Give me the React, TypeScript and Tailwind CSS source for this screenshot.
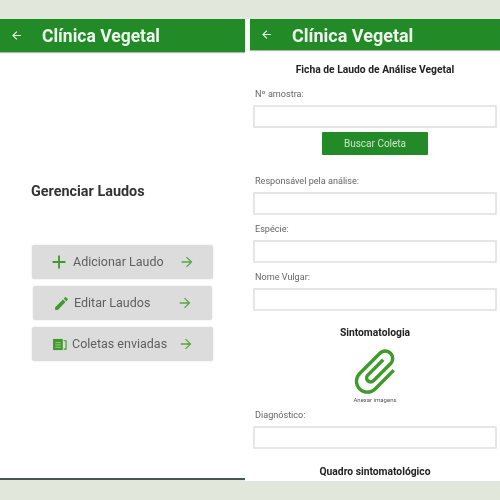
import { MdArrowBack, MdArrowForward, MdAdd, MdEdit, MdAttachFile } from "react-icons/md";

function Header({ size, iconGap, pad, h, textPt }: { size: string; iconGap: string; pad: string; h: string; textPt: string }) {
  return (
    <div className={`flex items-center bg-[#228b28] text-[#eef6ee] shadow-[0_1px_1px_rgba(80,120,80,0.5)] ${h} ${pad}`}>
      <MdArrowBack className="text-[13px] shrink-0" />
      <span className={`font-bold ${size} ${iconGap} ${textPt}`}>Clínica Vegetal</span>
    </div>
  );
}

function MenuButton({ w, icon, label, gap, arrowMl, pl }: { w: string; icon: React.ReactNode; label: string; gap: string; arrowMl: string; pl: string }) {
  return (
    <div className={`flex items-center h-[34px] rounded-[2px] bg-[#dcdcdc] shadow-[0_0_2px_rgba(0,0,0,0.12)] ${w} ${pl}`}>
      <span className="w-[16px] h-[16px] flex items-center justify-center text-[#3f9a2c] shrink-0">{icon}</span>
      <span className={`text-[12.5px] text-[#5f5f5f] ${gap}`}>{label}</span>
      <MdArrowForward className={`text-[16px] text-[#56a83e] shrink-0 ${arrowMl}`} />
    </div>
  );
}

function Field({ label, mt }: { label: string; mt: string }) {
  return (
    <div className={mt}>
      <div className="text-[9.1px] leading-[12px] text-[#666] ml-[2px]">{label}</div>
      <div className="mt-[5px] h-[23px] bg-white border-2 border-[#e6e6e6] rounded-[1px]" />
    </div>
  );
}

export default function App() {
  return (
    <div className="w-[500px] h-[500px] bg-[#e2e7dc] pt-[19px] flex items-start overflow-hidden blur-[0.6px] [font-family:Roboto,'Liberation_Sans',sans-serif]">
      <div className="w-[245px] h-[461px] bg-white border-b-2 border-[#4a5550] flex flex-col">
        <Header h="h-[33px]" pad="pl-[10px]" size="text-[17.5px]" iconGap="ml-[19px]" textPt="pt-[2px]" />
        <div className="mt-[131px] ml-[31px] text-[14.4px] leading-[18px] font-bold text-[#333]">Gerenciar Laudos</div>
        <div className="mt-[44px] flex flex-col items-center gap-[7px]">
          <MenuButton w="w-[181px]" pl="pl-[19px]" gap="ml-[6px]" arrowMl="ml-[15px]" label="Adicionar Laudo" icon={<MdAdd className="text-[22px] shrink-0" />} />
          <MenuButton w="w-[179px]" pl="pl-[20px]" gap="ml-[5px]" arrowMl="ml-[27px]" label="Editar Laudos" icon={<MdEdit className="text-[17px] shrink-0" />} />
          <MenuButton w="w-[181px]" pl="pl-[20px]" gap="ml-[4px]" arrowMl="ml-[11px]" label="Coletas enviadas" icon={
            <svg viewBox="0 0 16 14" className="w-[16px] h-[13px]" fill="none">
              <path d="M0.5 1h10.5v12H0.5z" fill="#3f9a2c" />
              <path d="M12 3h2.5v9H12" stroke="#3f9a2c" strokeWidth="1.2" />
              <path d="M3 5h6M3 7.5h6M3 10h6" stroke="#9fce92" strokeWidth="1" />
            </svg>
          } />
        </div>
      </div>
      <div className="w-[255px] h-[462px] bg-white pl-[5px] overflow-hidden">
        <Header h="h-[31px]" pad="pl-[10px]" size="text-[18px]" iconGap="ml-[19px]" textPt="pt-[1px]" />
        <div className="pl-[3px] pr-[3px]">
          <div className="mt-[14px] text-center text-[10.3px] leading-[12px] font-bold text-[#222]">Ficha de Laudo de Análise Vegetal</div>
          <Field label="Nº amostra:" mt="mt-[12px]" />
          <div className="mt-[4px] mx-auto w-[106px] h-[23px] rounded-[1px] bg-[#228b28] text-[#c9e6c9] text-[10px] flex items-center justify-center">Buscar Coleta</div>
          <Field label="Responsável pela análise:" mt="mt-[20px]" />
          <Field label="Espécie:" mt="mt-[8px]" />
          <Field label="Nome Vulgar:" mt="mt-[8px]" />
          <div className="mt-[16px] text-center text-[10.3px] leading-[12px] font-bold text-[#222]">Sintomatologia</div>
          <div className="mt-[9px] flex justify-center h-[46px] items-center">
            <MdAttachFile className="text-[55px] text-[#3f9a2c] rotate-45 shrink-0" />
          </div>
          <div className="mt-[2px] text-center text-[6px] leading-[8px] text-[#555]">Anexar imagens</div>
          <Field label="Diagnóstico:" mt="mt-[5px]" />
          <div className="mt-[17px] text-center text-[10.3px] leading-[12px] font-bold text-[#222]">Quadro sintomatológico</div>
        </div>
      </div>
    </div>
  );
}
